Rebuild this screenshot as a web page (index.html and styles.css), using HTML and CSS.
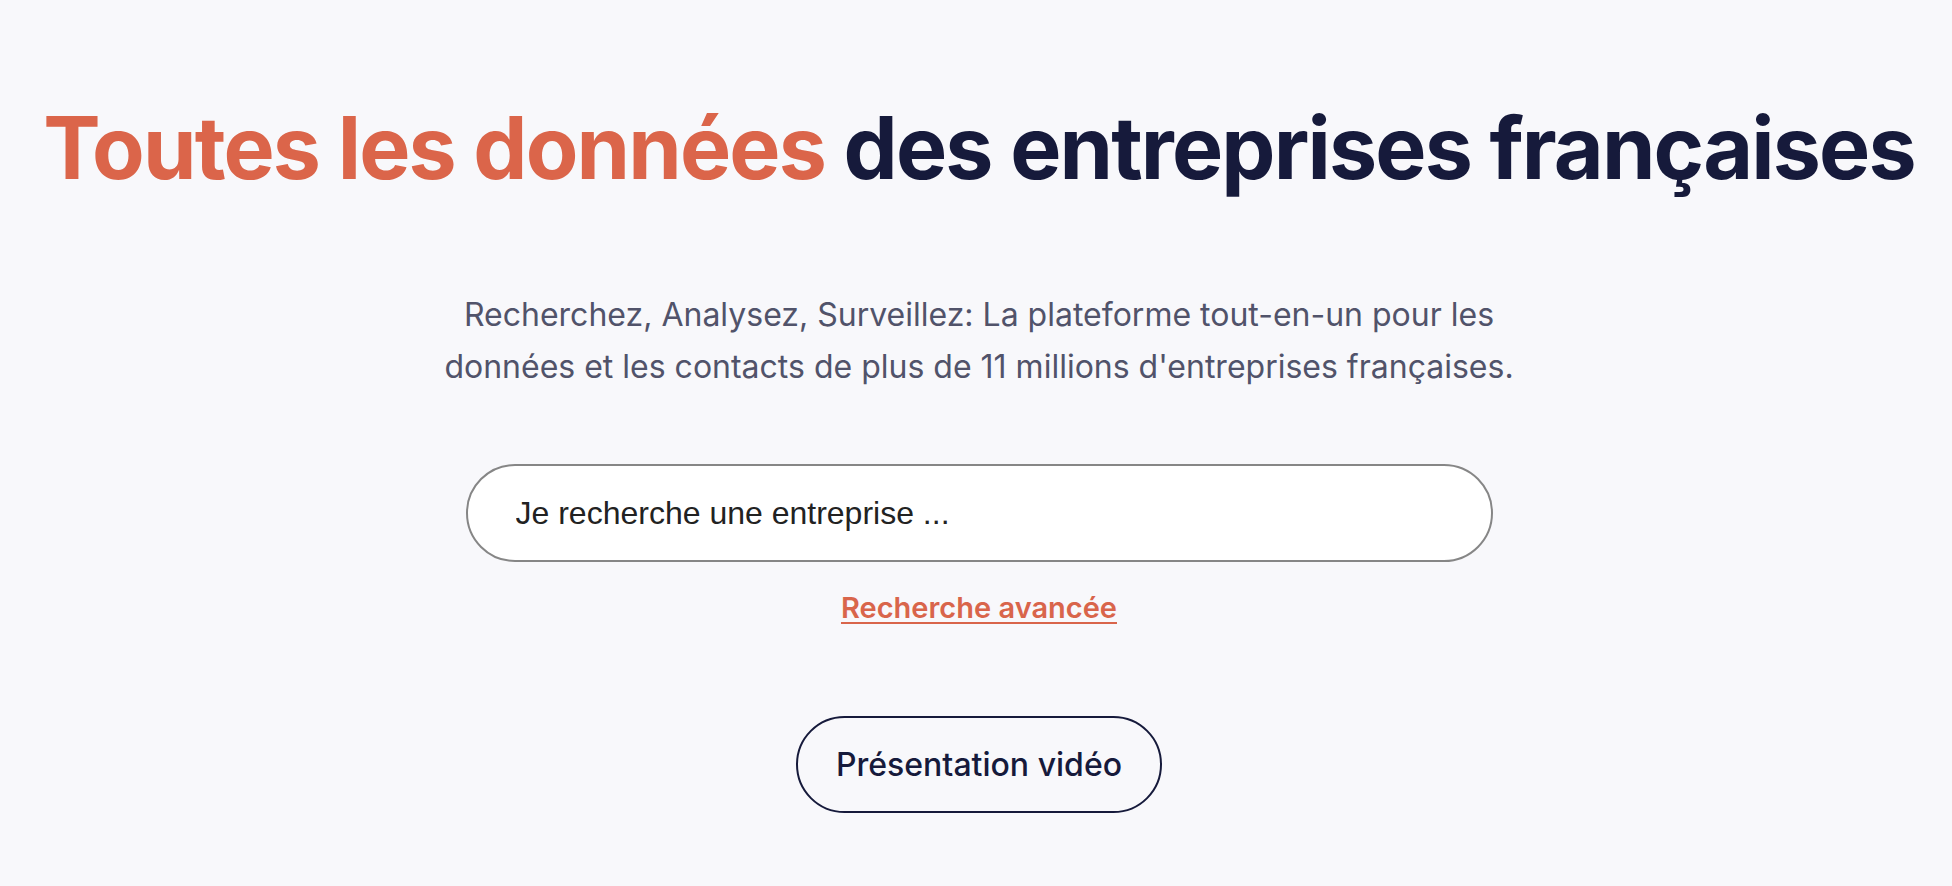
FILE: index.html
```html
<!DOCTYPE html>
<html lang="fr">
<head>
    <meta charset="UTF-8">
    <meta name="viewport" content="width=device-width, initial-scale=1.0">
    <title>Toutes les données des entreprises françaises</title>
    <link rel="stylesheet" href="styles.css">
</head>
<body>
    <!-- Hero -->
    <main class="hero">
        <h1 class="hero-title">
            <span class="accent">Toutes les données</span> des entreprises françaises
        </h1>

        <p class="hero-subtitle">
            Recherchez, Analysez, Surveillez: La plateforme tout-en-un pour les
            données et les contacts de plus de 11 millions d'entreprises françaises.
        </p>

        <!-- Search -->
        <form class="search-form" onsubmit="return false;">
            <input class="search-input" type="text" placeholder="Je recherche une entreprise ...">
        </form>
        <a class="advanced-link" href="#">Recherche avancée</a>

        <button class="video-btn" type="button">Présentation vidéo</button>
    </main>
</body>
</html>
```

FILE: styles.css
```css
/* Reset and body styling */
* {
    margin: 0;
    padding: 0;
    box-sizing: border-box;
}

body {
    background-color: #f8f8fb;
    font-family: Inter, "Noto Sans", sans-serif;
    color: #161a3b;
}

/* Hero */
.hero {
    display: flex;
    flex-direction: column;
    align-items: center;
    padding: 97px 0 0 6px;
    text-align: center;
}

.hero-title {
    font-size: 86px;
    font-weight: 700;
    line-height: 1.2;
    letter-spacing: -1.85px;
    color: #161a3b;
    white-space: nowrap;
}

.hero-title .accent {
    color: #db654a;
}

.hero-subtitle {
    margin-top: 89px;
    max-width: 1130px;
    font-size: 32px;
    line-height: 52px;
    color: #51536a;
}

/* Search */
.search-form {
    margin-top: 71px;
}

.search-input {
    display: block;
    width: 1027px;
    height: 98px;
    padding: 0 40px 0 48px;
    border: 2px solid #868686;
    border-radius: 49px;
    background-color: #fff;
    font-family: "Liberation Sans", Arial, sans-serif;
    font-size: 32px;
    color: #222;
    outline: none;
}

.search-input::placeholder {
    color: #222;
    opacity: 1;
}

.advanced-link {
    margin-top: 29px;
    font-size: 29px;
    font-weight: 600;
    line-height: 1.2;
    color: #d9654b;
    text-decoration: underline;
    text-decoration-thickness: 2px;
    text-underline-offset: 4px;
}

/* Video button */
.video-btn {
    margin-top: 90px;
    width: 366px;
    height: 97px;
    border: 2px solid #161a3b;
    border-radius: 49px;
    background-color: transparent;
    font-family: Inter, "Noto Sans", sans-serif;
    font-size: 32px;
    font-weight: 500;
    color: #161a3b;
    cursor: pointer;
}
```
